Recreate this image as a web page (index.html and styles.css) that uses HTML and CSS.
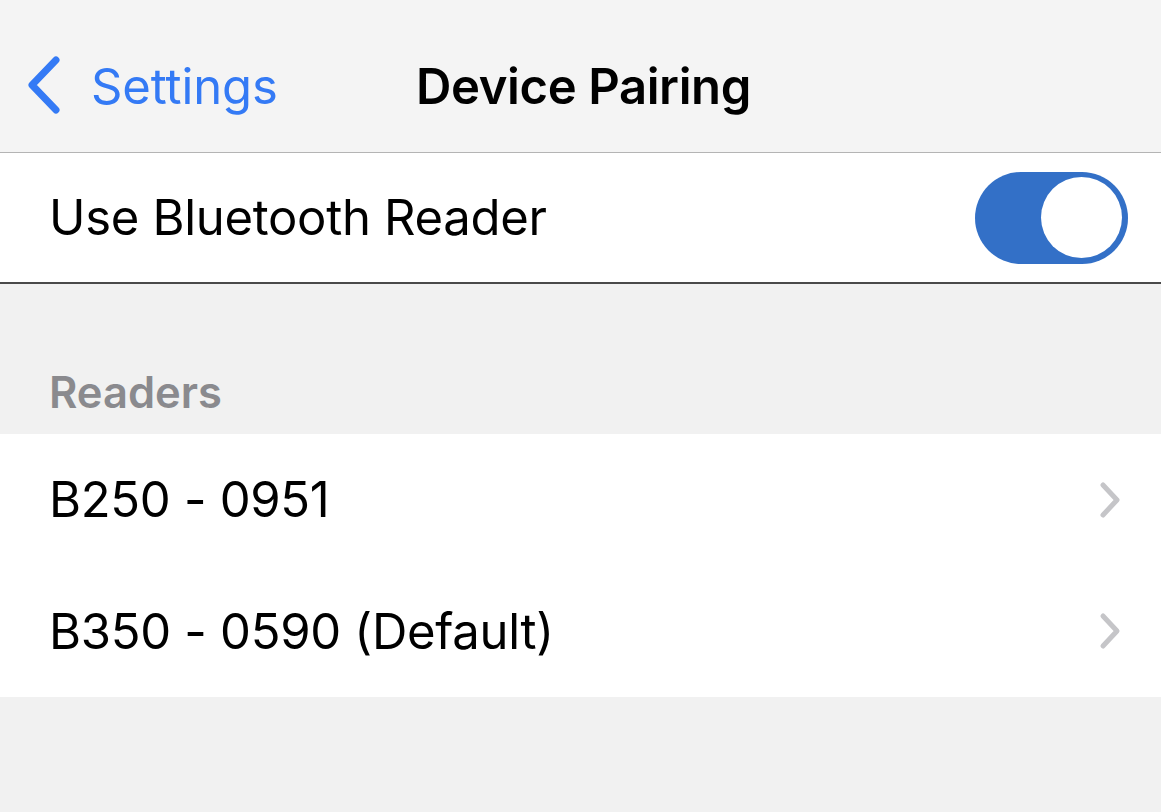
FILE: index.html
```html
<!DOCTYPE html>
<html lang="en">
<head>
<meta charset="utf-8">
<title>Device Pairing</title>
<link rel="stylesheet" href="styles.css">
</head>
<body>
<header class="nav">
  <a class="back" href="#">
    <svg class="back-icon" width="40" height="60" viewBox="0 0 40 60" aria-hidden="true">
      <polyline points="31,4 7,29 31,54" fill="none" stroke="#347af5" stroke-width="7" stroke-linecap="round" stroke-linejoin="round"/>
    </svg>
    <span class="back-label">Settings</span>
  </a>
  <h1 class="title">Device Pairing</h1>
  <div class="nav-spacer"></div>
</header>

<section class="group group-toggle">
  <div class="row row-toggle">
    <span class="row-label">Use Bluetooth Reader</span>
    <span class="switch"><span class="knob"></span></span>
  </div>
</section>

<div class="section-header">Readers</div>

<section class="group group-list">
  <div class="row row-link">
    <span class="row-label">B250 - 0951</span>
    <svg class="chev" width="24" height="38" viewBox="0 0 24 38" aria-hidden="true">
      <polyline points="5,4 19,19 5,34" fill="none" stroke="#c5c5c8" stroke-width="5" stroke-linecap="round" stroke-linejoin="round"/>
    </svg>
  </div>
  <div class="row row-link">
    <span class="row-label">B350 - 0590 (Default)</span>
    <svg class="chev" width="24" height="38" viewBox="0 0 24 38" aria-hidden="true">
      <polyline points="5,4 19,19 5,34" fill="none" stroke="#c5c5c8" stroke-width="5" stroke-linecap="round" stroke-linejoin="round"/>
    </svg>
  </div>
</section>
</body>
</html>
```
FILE: styles.css
```css
* { box-sizing: border-box; }

html, body {
  margin: 0;
  padding: 0;
}

body {
  background: #f1f1f1;
  font-family: Inter, "Noto Sans", "Liberation Sans", sans-serif;
  color: #000;
  width: 1161px;
  min-height: 812px;
  overflow: hidden;
}

.nav {
  height: 153px;
  background: #f4f4f4;
  border-bottom: 1px solid #b4b4b4;
  display: grid;
  grid-template-columns: 1fr auto 1fr;
  align-items: center;
  padding-top: 20px;
}

.back {
  display: flex;
  align-items: center;
  text-decoration: none;
  color: #347af5;
  padding-left: 25px;
}

.back-icon {
  display: block;
  margin-right: 26px;
}

.back-label {
  font-size: 49px;
  letter-spacing: -0.1px;
}

.title {
  margin: 0;
  font-size: 49px;
  font-weight: 600;
  letter-spacing: -0.4px;
  padding-left: 6px;
}

.group {
  background: #fff;
}

.group-toggle {
  border-bottom: 2px solid #4a4a4a;
}

.row {
  display: flex;
  align-items: center;
  justify-content: space-between;
  padding-left: 49px;
}

.row-label {
  font-size: 49px;
  letter-spacing: -0.3px;
}

.row-toggle {
  height: 129px;
  padding-right: 33px;
}

.switch {
  width: 153px;
  height: 92px;
  border-radius: 46px;
  background: #3370c7;
  display: flex;
  align-items: center;
  justify-content: flex-end;
  padding-right: 6px;
}

.knob {
  width: 81px;
  height: 81px;
  border-radius: 50%;
  background: #fff;
}

.section-header {
  height: 150px;
  display: flex;
  align-items: center;
  padding: 66px 0 0 49px;
  font-size: 43.5px;
  font-weight: 600;
  color: #8a8a8e;
}

.row-link {
  height: 131.5px;
  padding-right: 39px;
}

.chev {
  display: block;
}
```
